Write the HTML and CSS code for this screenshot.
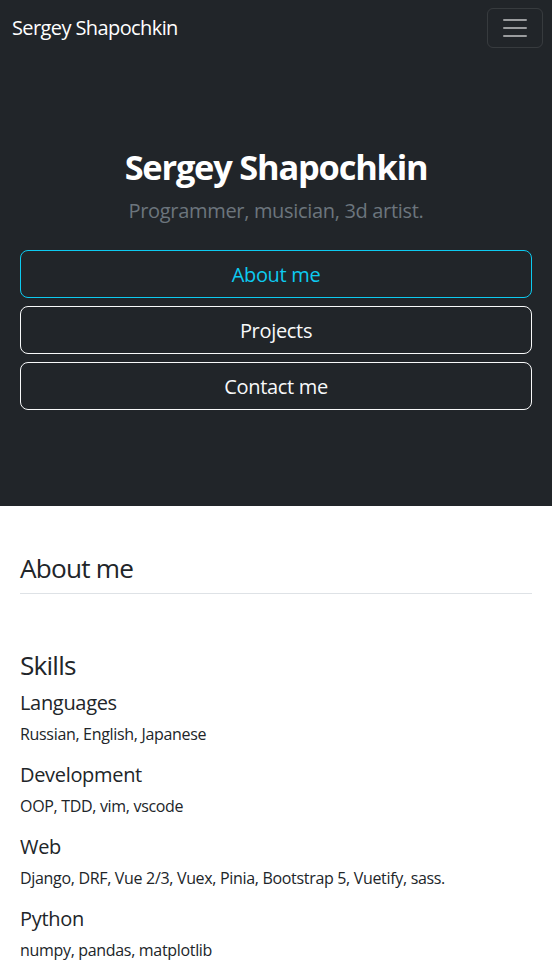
FILE: index.html
```html
<!DOCTYPE html>
<html lang="en">
<head>
<meta charset="utf-8">
<title>Sergey Shapochkin</title>
<link rel="stylesheet" href="styles.css">
</head>
<body>
<nav class="navbar">
  <a class="brand" href="#">Sergey Shapochkin</a>
  <button class="toggler" aria-label="Toggle navigation">
    <svg width="30" height="30" viewBox="0 0 30 30"><path d="M4 7h22M4 15h22M4 23h22" stroke="rgba(255,255,255,0.55)" stroke-width="2" stroke-linecap="round"/></svg>
  </button>
</nav>
<header class="hero">
  <h1 class="hero-title">Sergey Shapochkin</h1>
  <p class="lead">Programmer, musician, 3d artist.</p>
  <div class="buttons">
    <a class="btn btn-info" href="#about">About me</a>
    <a class="btn btn-light" href="#projects">Projects</a>
    <a class="btn btn-light" href="#contact">Contact me</a>
  </div>
</header>
<main class="content">
  <h2 class="section-title bordered" id="about">About me</h2>
  <section class="skills">
    <h2 class="section-title">Skills</h2>
    <h5 class="skill-head">Languages</h5>
    <p class="skill-text">Russian, English, Japanese</p>
    <h5 class="skill-head">Development</h5>
    <p class="skill-text">OOP, TDD, vim, vscode</p>
    <h5 class="skill-head">Web</h5>
    <p class="skill-text">Django, DRF, Vue 2/3, Vuex, Pinia, Bootstrap 5, Vuetify, sass.</p>
    <h5 class="skill-head">Python</h5>
    <p class="skill-text">numpy, pandas, matplotlib</p>
  </section>
</main>
</body>
</html>
```
FILE: styles.css
```css
* { box-sizing: border-box; }
html, body { margin: 0; padding: 0; }
body {
  font-family: "Open Sans", "Noto Sans", sans-serif;
  font-size: 16px;
  line-height: 1.5;
  color: #212529;
  background: #fff;
  letter-spacing: -0.02em;
}
.navbar {
  background: #212529;
  height: 56px;
  display: flex;
  align-items: center;
  justify-content: space-between;
  padding: 8px 9px 8px 12px;
}
.brand {
  color: #fff;
  text-decoration: none;
  font-size: 20px;
  line-height: 30px;
  letter-spacing: -0.03em;
}
.toggler {
  width: 56px;
  height: 40px;
  border: 1px solid rgba(255,255,255,0.1);
  border-radius: 6px;
  background: transparent;
  display: flex;
  align-items: center;
  justify-content: center;
  padding: 0;
}
.toggler svg { display: block; }
.hero {
  background: #212529;
  text-align: center;
  padding: 90px 20px 96px 20px;
}
.hero-title {
  margin: 0 0 9px 0;
  color: #fff;
  font-weight: 700;
  font-size: 34.4px;
  line-height: 1.2;
  letter-spacing: -0.035em;
}
.lead {
  margin: 0 0 24px 0;
  font-size: 20px;
  line-height: 30px;
  color: #6c757d;
}
.buttons {
  display: flex;
  flex-direction: column;
  gap: 8px;
}
.btn {
  display: block;
  height: 48px;
  font-size: 20px;
  line-height: 30px;
  padding: 9px 16px 7px 16px;
  border-radius: 8px;
  border: 1px solid;
  text-decoration: none;
  text-align: center;
}
.btn-info { color: #0dcaf0; border-color: #0dcaf0; }
.btn-light { color: #f8f9fa; border-color: #f8f9fa; }
.content {
  padding: 47px 20px 20px 20px;
}
.section-title {
  font-size: 26.2px;
  line-height: 1.2;
  font-weight: 400;
  margin: 0 0 8px 0;
  letter-spacing: -0.03em;
}
.bordered {
  padding-bottom: 8px;
  border-bottom: 1px solid #dee2e6;
}
.skills { padding-top: 48px; }
.skill-head {
  font-size: 20px;
  line-height: 24px;
  font-weight: 400;
  margin: 0 0 7px 0;
  padding-top: 2px;
}
.skill-text {
  margin: 0 0 15px 0;
  font-size: 16px;
  line-height: 24px;
}
```
